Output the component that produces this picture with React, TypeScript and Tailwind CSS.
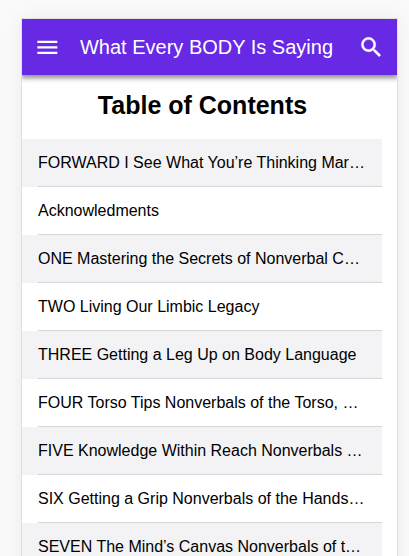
import * as React from "react";

const CHAPTERS = [
  "FORWARD I See What You’re Thinking Marvin Karlins, PhD",
  "Acknowledments",
  "ONE Mastering the Secrets of Nonverbal Communication",
  "TWO Living Our Limbic Legacy",
  "THREE Getting a Leg Up on Body Language",
  "FOUR Torso Tips Nonverbals of the Torso, Hips, Chest, and Shoulders",
  "FIVE Knowledge Within Reach Nonverbals of the Arms",
  "SIX Getting a Grip Nonverbals of the Hands and Fingers",
  "SEVEN The Mind’s Canvas Nonverbals of the Face",
];

function AppBar() {
  return (
    <header className="relative z-10 flex h-14 items-center bg-[#6729e3] pr-[12.5px] pl-[11.67px] text-white shadow-[0_2px_5px_1px_rgba(0,0,0,0.45)]">
      <button type="button" aria-label="Menu" className="flex-none">
        <svg viewBox="0 0 24 24" className="block size-[26.67px] fill-current">
          <path d="M3 18h18v-2H3v2zm0-5h18v-2H3v2zm0-7v2h18V6H3z" />
        </svg>
      </button>
      <h1 className="ml-[19.66px] flex-1 truncate text-[20px] leading-8">
        What Every BODY Is Saying
      </h1>
      <button type="button" aria-label="Search" className="flex-none">
        <svg
          viewBox="0 0 24 24"
          className="block size-[26.67px] fill-current stroke-current stroke-[0.3]"
        >
          <path d="M15.5 14h-.79l-.28-.27A6.471 6.471 0 0 0 16 9.5 6.5 6.5 0 1 0 9.5 16c1.61 0 3.09-.59 4.23-1.57l.27.28v.79l5 4.99L20.49 19l-4.99-5zm-6 0C7.01 14 5 11.99 5 9.5S7.01 5 9.5 5 14 7.01 14 9.5 11.99 14 9.5 14z" />
        </svg>
      </button>
    </header>
  );
}

function ChapterRow({ title, shaded }: { title: string; shaded: boolean }) {
  return (
    <li className={`h-12 pl-4 ${shaded ? "bg-[#f3f3f5]" : "bg-white"}`}>
      <div className="h-12 border-b border-[#d6d6d8] pr-4">
        <span className="block truncate text-base leading-[47px]">{title}</span>
      </div>
    </li>
  );
}

export default function App() {
  return (
    <div className="h-screen overflow-hidden bg-[#fafafa] pt-[19px] pr-3 pl-[22px] font-['Liberation_Sans',Arial,sans-serif] text-black">
      <main className="h-[640px] bg-white shadow-[0_0_0_1px_rgba(0,0,0,0.08),0_0_20px_rgba(0,0,0,0.07)]">
        <div className="h-full overflow-hidden">
          <AppBar />
          <div className="pr-[15px]">
            <h2 className="pt-[15px] pb-[19px] pl-px text-center text-[25px] leading-[30px] font-bold">
              Table of Contents
            </h2>
            <ul>
              {CHAPTERS.map((title, i) => (
                <ChapterRow key={title} title={title} shaded={i % 2 === 0} />
              ))}
            </ul>
          </div>
        </div>
      </main>
    </div>
  );
}
